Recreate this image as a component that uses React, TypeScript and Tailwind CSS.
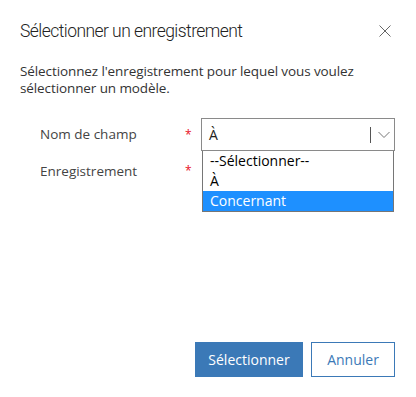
import { useState } from "react";

const options = ["--Sélectionner--", "À", "Concernant"];

function Chevron() {
  return (
    <svg width="12" height="8" viewBox="0 0 12 8" fill="none">
      <path d="M0.5 1L6 6.5L11.5 1" stroke="#777" strokeWidth="1" />
    </svg>
  );
}

function CloseIcon() {
  return (
    <svg width="12" height="12" viewBox="0 0 12 12" fill="none">
      <path d="M0.5 0.5L11.5 11.5M11.5 0.5L0.5 11.5" stroke="#666" strokeWidth="1" />
    </svg>
  );
}

export default function App() {
  const [value] = useState("À");
  const [hover] = useState("Concernant");

  return (
    <div
      className="flex h-[397px] w-[416px] flex-col bg-white text-[#333]"
      style={{ fontFamily: '"Open Sans", "Noto Sans", sans-serif' }}
    >
      <div className="flex items-center justify-between pl-5 pr-[25px] pt-[19px]">
        <h1
          className="text-[17.5px] font-light leading-[24px] tracking-[-0.55px] text-[#222]"
          style={{ fontFamily: 'Roboto, "Open Sans", sans-serif' }}
        >
          Sélectionner un enregistrement
        </h1>
        <button className="flex h-3 w-3 items-center justify-center">
          <CloseIcon />
        </button>
      </div>

      <p className="mt-[20px] px-5 text-[13.5px] leading-[17px] tracking-[-0.1px] text-[#333]">
        Sélectionnez l'enregistrement pour lequel vous voulez sélectionner un modèle.
      </p>

      <div className="mt-[21px] flex flex-col pl-10 pr-[21px]">
        <div className="flex items-center">
          <span className="w-[145px] text-[13.5px] text-[#444]">Nom de champ</span>
          <span className="w-4 text-[12px] text-[#e81123]">*</span>
          <div className="relative ml-auto w-[194px]">
            <div className="flex h-[33px] items-center border border-[#8a8a8a] bg-white pl-[7px] pr-[4px]">
              <span className="flex-1 text-[14px] text-[#222]">{value}</span>
              <span className="mr-[7px] h-[16px] w-px bg-[#555]" />
              <Chevron />
            </div>
            <ul className="absolute left-[1px] right-[1px] top-[33px] z-10 border border-t-0 border-[#767676] bg-white text-[14px] leading-[20px] text-black">
              {options.map((o) => (
                <li
                  key={o}
                  className={`pl-[7px] ${o === hover ? "bg-[#1e90ff] text-white" : ""}`}
                >
                  {o}
                </li>
              ))}
            </ul>
          </div>
        </div>
        <div className="flex h-[40px] items-center">
          <span className="w-[145px] text-[13.5px] text-[#444]">Enregistrement</span>
          <span className="w-4 text-[12px] text-[#e81123]">*</span>
        </div>
      </div>

      <div className="mt-auto flex justify-end gap-2 pb-5 pr-[21px]">
        <button className="h-[35px] w-[108px] bg-[#3b79b7] text-[14px] text-white">
          Sélectionner
        </button>
        <button className="h-[35px] w-[84px] border border-[#3b79b7] bg-white text-[14px] text-[#3b79b7]">
          Annuler
        </button>
      </div>
    </div>
  );
}
